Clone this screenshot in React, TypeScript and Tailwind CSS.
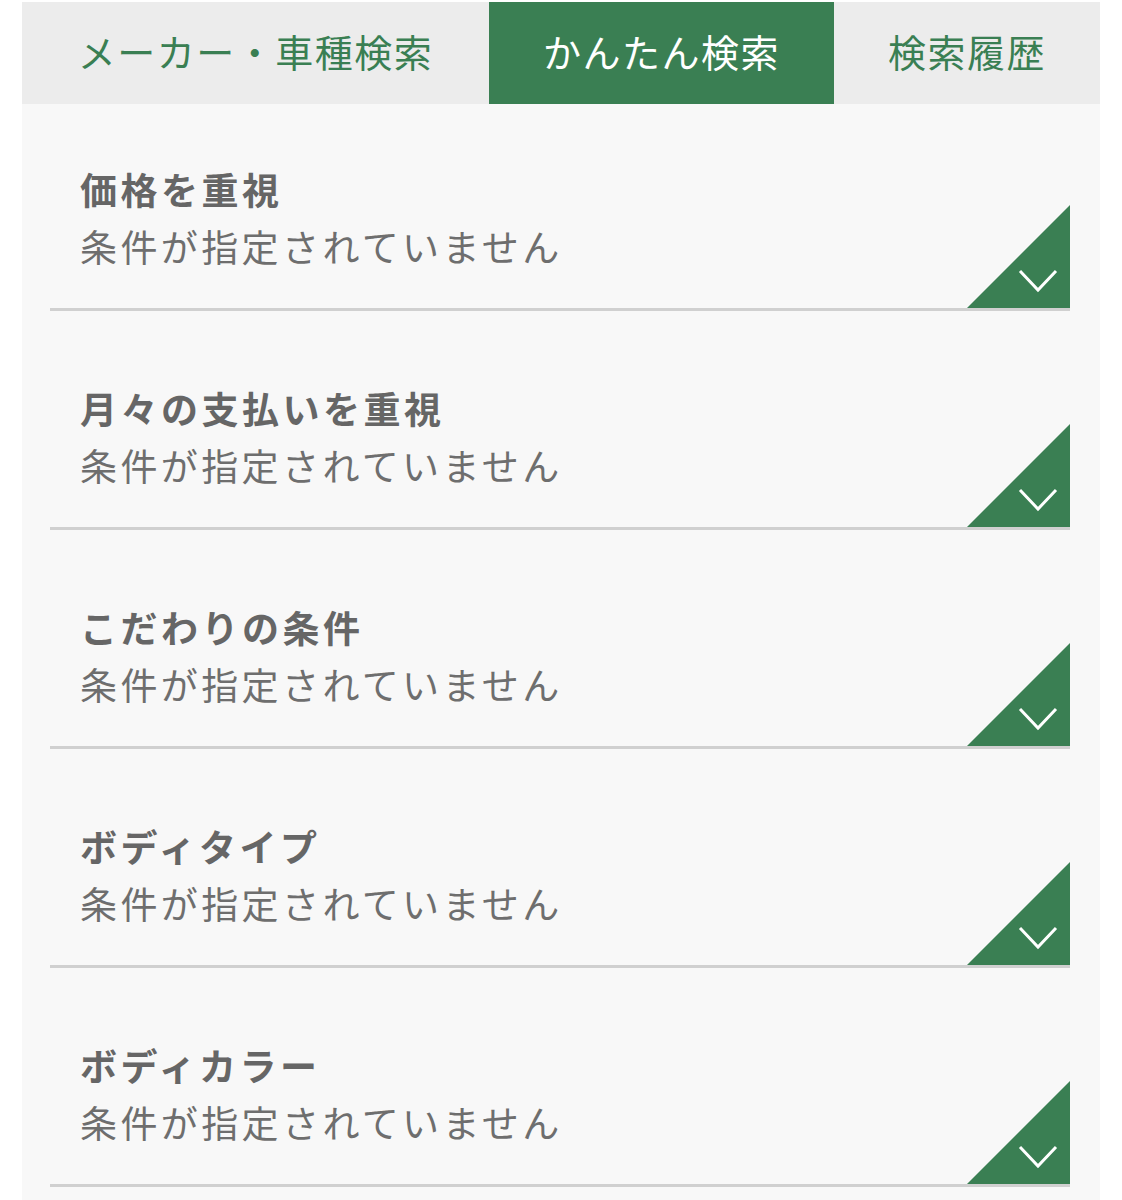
import { FunctionComponent } from "react";

const font = { fontFamily: '"Noto Sans CJK JP", "Noto Sans", sans-serif' };

const items = ["価格を重視", "月々の支払いを重視", "こだわりの条件", "ボディタイプ", "ボディカラー"];

const Corner: FunctionComponent = () => (
  <svg className="absolute right-0 bottom-0" width="103" height="103" viewBox="0 0 103 103">
    <polygon points="0,103 103,0 103,103" fill="#3a7f53" />
    <polyline points="53,66 71,85 89,66" fill="none" stroke="#ffffff" strokeWidth="3" />
  </svg>
);

const App: FunctionComponent = () => {
  return (
    <div className="w-[1122px] min-h-[1200px] bg-white px-[22px] pt-[2px]" style={font}>
      <nav className="flex h-[102px] bg-[#ececec] text-[38px] tracking-[1.5px]">
        <div className="w-[467px] flex items-center justify-center pb-[6px] text-[#3a7f53]">メーカー・車種検索</div>
        <div className="w-[345px] flex items-center justify-center pb-[6px] bg-[#3a7f53] text-white">かんたん検索</div>
        <div className="flex-1 flex items-center justify-center pb-[6px] text-[#3a7f53]">検索履歴</div>
      </nav>
      <section className="bg-[#f8f8f8] pl-[28px] pr-[30px] pb-[20px] min-h-[1096px]">
        {items.map((title, i) => (
          <div
            key={title}
            className={
              "relative border-b-[3px] border-[#d0d0d0] pl-[30px] pb-[36px] " +
              (i === 0 ? "pt-[60px]" : "pt-[72px]")
            }
          >
            <h2 className="text-[37px] leading-[50px] font-bold text-[#666666] tracking-[3.5px]">{title}</h2>
            <p className="mt-[6px] text-[37px] leading-[52px] text-[#6e6e6e] tracking-[3.4px]">
              条件が指定されていません
            </p>
            <Corner />
          </div>
        ))}
      </section>
    </div>
  );
};

export default App;
